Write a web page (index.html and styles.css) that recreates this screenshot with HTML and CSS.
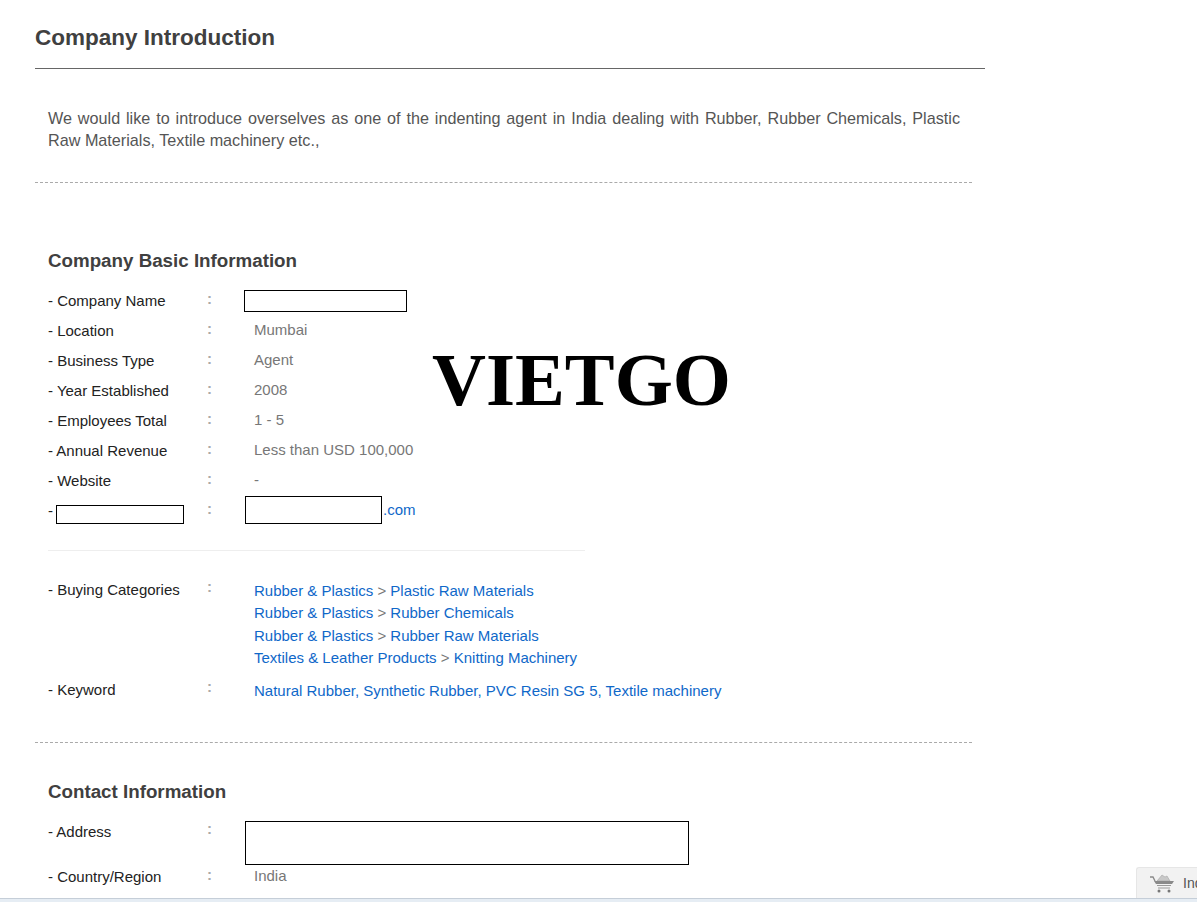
FILE: index.html
```html
<!DOCTYPE html>
<html lang="en">
<head>
<meta charset="utf-8">
<title>Company Introduction</title>
<link rel="stylesheet" href="styles.css">
</head>
<body>
<main class="page">
  <h1 class="page-title">Company Introduction</h1>
  <section class="intro">
    <p>We would like to introduce overselves as one of the indenting agent in India dealing with Rubber, Rubber Chemicals, Plastic Raw Materials, Textile machinery etc.,</p>
  </section>
  <section class="basic">
    <h2 class="section-title">Company Basic Information</h2>
    <div class="rows">
      <div class="row"><span class="label">- Company Name</span><span class="colon">:</span><span class="value"><span class="redact redact-name"></span></span></div>
      <div class="row"><span class="label">- Location</span><span class="colon">:</span><span class="value">Mumbai</span></div>
      <div class="row"><span class="label">- Business Type</span><span class="colon">:</span><span class="value">Agent</span></div>
      <div class="row"><span class="label">- Year Established</span><span class="colon">:</span><span class="value">2008</span></div>
      <div class="row"><span class="label">- Employees Total</span><span class="colon">:</span><span class="value">1 - 5</span></div>
      <div class="row"><span class="label">- Annual Revenue</span><span class="colon">:</span><span class="value">Less than USD 100,000</span></div>
      <div class="row"><span class="label">- Website</span><span class="colon">:</span><span class="value">-</span></div>
      <div class="row"><span class="label">- <span class="redact redact-label"></span></span><span class="colon">:</span><span class="value"><span class="redact redact-site"></span><a class="link" href="#">.com</a></span></div>
    </div>
    <hr class="thin">
    <div class="row row-cats"><span class="label">- Buying Categories</span><span class="colon">:</span>
      <div class="value links">
        <div><a class="link" href="#">Rubber &amp; Plastics</a> &gt; <a class="link" href="#">Plastic Raw Materials</a></div>
        <div><a class="link" href="#">Rubber &amp; Plastics</a> &gt; <a class="link" href="#">Rubber Chemicals</a></div>
        <div><a class="link" href="#">Rubber &amp; Plastics</a> &gt; <a class="link" href="#">Rubber Raw Materials</a></div>
        <div><a class="link" href="#">Textiles &amp; Leather Products</a> &gt; <a class="link" href="#">Knitting Machinery</a></div>
      </div>
    </div>
    <div class="row row-key"><span class="label">- Keyword</span><span class="colon">:</span>
      <div class="value links"><a class="link" href="#">Natural Rubber, Synthetic Rubber, PVC Resin SG 5, Textile machinery</a></div>
    </div>
  </section>
  <section class="contact">
    <h2 class="section-title">Contact Information</h2>
    <div class="row row-address"><span class="label">- Address</span><span class="colon">:</span><span class="value"><span class="redact redact-address"></span></span></div>
    <div class="row"><span class="label">- Country/Region</span><span class="colon">:</span><span class="value">India</span></div>
  </section>
</main>
<div class="watermark">VIETGO</div>
<div class="cart-tab">
  <svg class="cart-icon" viewBox="0 0 26 20" width="26" height="20" aria-hidden="true">
    <path d="M1 4h3l2 4" fill="none" stroke="#8a8a8a" stroke-width="1.4"/>
    <path d="M8 8l5-6 3 2 2-1 3 5z" fill="#c8c8c8" stroke="#a5a5a5" stroke-width=".6"/>
    <path d="M5 8h20l-2 3H7z" fill="#8a8a8a"/>
    <path d="M8 12.5h14M9 15h12" stroke="#9a9a9a" stroke-width="1.2"/>
    <circle cx="10" cy="18" r="1.5" fill="#777"/>
    <circle cx="20" cy="18" r="1.5" fill="#777"/>
  </svg>
  <span class="cart-text">Inquiry</span>
</div>
<div class="bottom-bar"></div>
</body>
</html>
```
FILE: styles.css
```css
html, body {
  margin: 0;
  height: 902px;
  overflow: hidden;
  background: #fff;
}
body {
  position: relative;
  font-family: "Liberation Sans", Arial, sans-serif;
  font-size: 15px;
  color: #666;
}
.page {
  width: 950px;
  margin-left: 35px;
  padding-top: 22px;
}
.page-title {
  margin: 0;
  height: 46px;
  font-size: 22.5px;
  line-height: 31px;
  font-weight: bold;
  color: #404040;
  border-bottom: 1px solid #666;
}
.intro {
  width: 937px;
  box-sizing: border-box;
  padding: 38px 12px 31px 13px;
  border-bottom: 1px dashed #aaa;
}
.intro p {
  margin: 0;
  font-size: 16.2px;
  line-height: 22px;
  text-align: justify;
  color: #555;
}
.basic {
  width: 937px;
  box-sizing: border-box;
  padding: 65px 0 37px 13px;
  border-bottom: 1px dashed #aaa;
}
.section-title {
  margin: 0 0 12px;
  font-size: 18.75px;
  line-height: 26px;
  font-weight: bold;
  color: #404040;
}
.row {
  display: grid;
  grid-template-columns: 159px 47px 1fr;
  height: 30px;
  line-height: 30px;
}
.label {
  color: #222;
}
.colon {
  font-weight: bold;
  color: #aaa;
  line-height: 26px;
  font-size: 15px;
}
.row-cats .colon,
.row-key .colon,
.row-address .colon {
  line-height: 24px;
}
.value {
  color: #777;
  font-size: 15px;
  line-height: 28px;
}
.redact {
  display: inline-block;
  box-sizing: border-box;
  border: 1px solid #000;
  background: #fff;
  vertical-align: middle;
}
.redact-name {
  width: 163px;
  height: 22px;
  margin-left: -10px;
}
.redact-label {
  width: 128px;
  height: 19px;
  margin-left: -1px;
  vertical-align: -8px;
}
.redact-site {
  width: 137px;
  height: 28px;
  margin: 0 1px 0 -9px;
  vertical-align: top;
}
.redact-address {
  width: 444px;
  height: 44px;
  margin: 4px 0 0 -9px;
  vertical-align: top;
}
.link {
  color: #0f68c9;
  text-decoration: none;
}
.thin {
  width: 537px;
  margin: 24px 0;
  border: 0;
  border-top: 1px solid #eee;
}
.row-cats {
  height: auto;
}
.links {
  line-height: 22.4px;
  padding-top: 5px;
}
.row-key {
  margin-top: 5px;
}
.contact {
  padding: 36px 0 0 13px;
}
.row-address {
  height: 45px;
}
.watermark {
  position: absolute;
  left: 432px;
  top: 338px;
  font-family: "Liberation Serif", "Times New Roman", serif;
  font-weight: bold;
  font-size: 74.7px;
  line-height: 84px;
  color: #000;
}
.cart-tab {
  position: absolute;
  left: 1136px;
  top: 867px;
  width: 61px;
  height: 31px;
  display: flex;
  align-items: center;
  gap: 8px;
  padding-left: 12px;
  box-sizing: border-box;
  background: #f2f2f2;
  border: 1px solid #e6e6e6;
  border-width: 1px 0 0 1px;
  border-radius: 3px 0 0 0;
  overflow: hidden;
  white-space: nowrap;
  font-size: 14px;
  color: #555;
}
.cart-icon {
  flex: none;
}
.bottom-bar {
  position: absolute;
  left: 0;
  right: 0;
  top: 898px;
  height: 4px;
  box-sizing: border-box;
  background: #e6edf4;
  border-top: 1px solid #c5ced8;
}
```
